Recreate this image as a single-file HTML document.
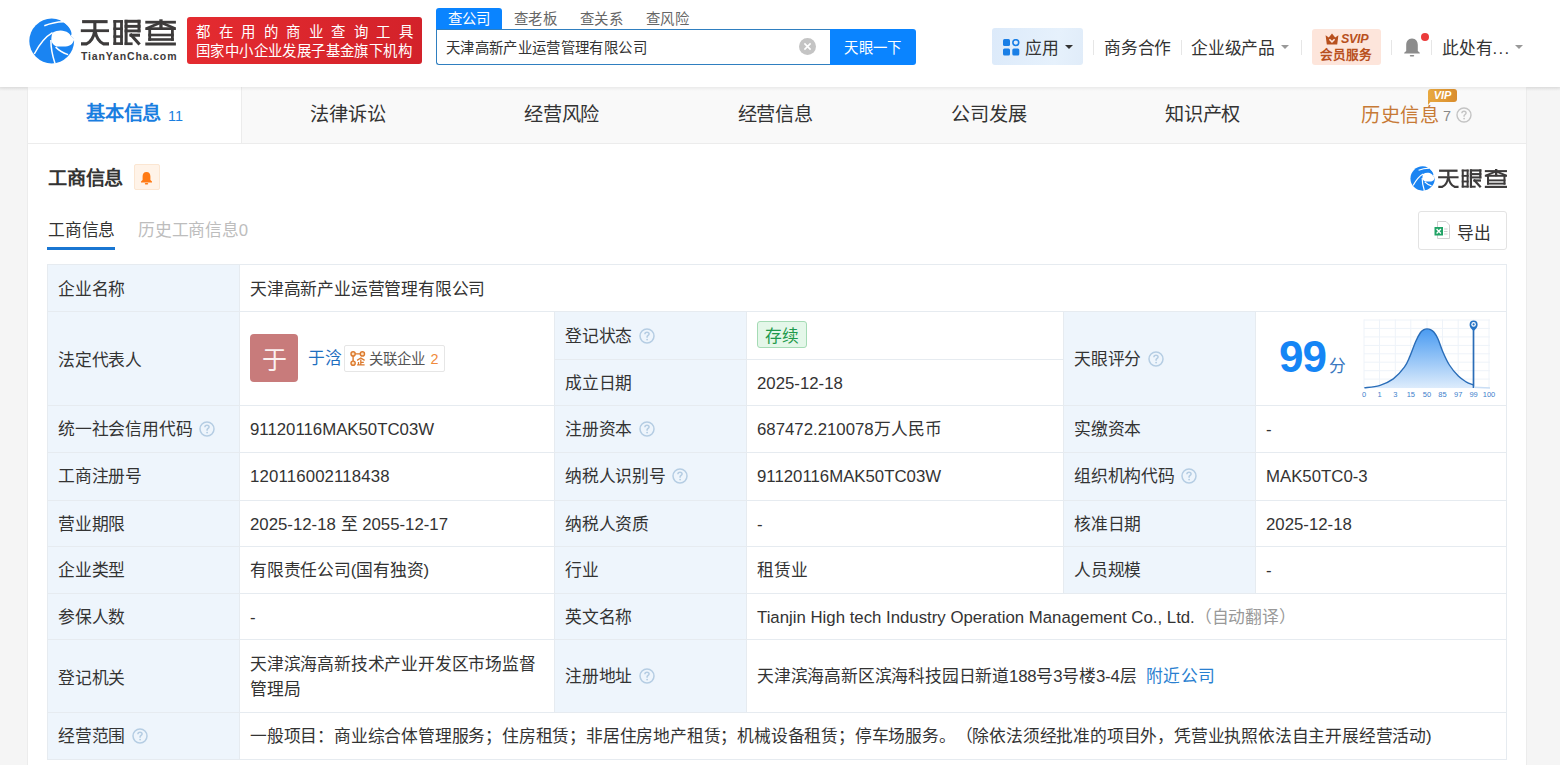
<!DOCTYPE html>
<html lang="zh-CN">
<head>
<meta charset="utf-8">
<style>
*{margin:0;padding:0;box-sizing:border-box}
html,body{width:1560px;height:765px;overflow:hidden;background:#f5f5f5;font-family:"Liberation Sans",sans-serif;color:#333}
.a{position:absolute;white-space:nowrap}
.sep{position:absolute;width:1px;background:#e6e6e6}
.caret{position:absolute;width:0;height:0;border-left:4px solid transparent;border-right:4px solid transparent;border-top:4px solid #999}
.tab{position:absolute;top:88px;height:54px;line-height:54px;text-align:center;font-size:19.2px;color:#333;letter-spacing:-0.2px}
.t16{font-size:16.8px;letter-spacing:-0.2px;text-spacing-trim:space-all}
.lbl{position:absolute;background:#eef5fc}
.hl{position:absolute;height:1px;background:#e6ebf0}
.vl{position:absolute;width:1px;background:#e6ebf0}
</style>
</head>
<body>
<!-- header -->
<div class="a" style="left:0;top:0;width:1560px;height:87px;background:#fff;box-shadow:0 1px 4px rgba(0,0,0,.07)"></div>
<svg class="a" style="left:24px;top:14px" width="56" height="54" viewBox="24 14 56 54">
  <circle cx="51.7" cy="41" r="22.4" fill="#1a84f2"/>
  <path d="M52.5 32.7 C55 31.3 58 30.5 60.6 30.5 C63.5 30.5 66.3 31.5 68.1 32.7 C69.5 33.7 70.3 34.7 70.7 35.8 L74.5 39 C73.8 41 73 42.6 71.9 44 C70 45.5 68 46.5 65.6 46.5 L56.2 46.5 C54 45.5 52.5 44 51.8 42.1 C51.3 40.5 51.2 38.5 51.5 37.1 C51.6 35.5 52 34 52.5 32.7 Z" fill="#fff"/>
  <path d="M60.5 20.8 C65.5 23 69.5 26.8 71 31.3 C71.7 33.3 71.8 35 70.7 35.8 L74.5 39 L77 39 L77 17 L62 17 Z" fill="#fff"/>
  <path d="M44.3 25.8 C50 23.5 57 22 63.5 21.8" stroke="#fff" stroke-width="1.5" fill="none"/>
  <path d="M34.3 54 C39 45 45 37 52.5 32.7" stroke="#fff" stroke-width="1.5" fill="none"/>
  <path d="M50.9 40 C50.8 48 52.5 56 55 63.5" stroke="#fff" stroke-width="1.5" fill="none"/>
  <path d="M55.6 47.1 C59 50.5 63.5 53 68.1 54.6" stroke="#fff" stroke-width="1.5" fill="none"/>
</svg>
<svg class="a" style="left:76px;top:14px" width="106" height="36" viewBox="76 14 106 36">
 <g fill="#3d3b3b">
  <rect x="82.1" y="20.1" width="25.5" height="3.1"/>
  <rect x="80.8" y="29.3" width="28.2" height="2.8"/>
  <rect x="93.3" y="22" width="3.1" height="8"/>
  <rect x="113.4" y="20.1" width="2.8" height="24.8"/><rect x="120.1" y="20.1" width="2.8" height="24.8"/>
  <rect x="113.4" y="20.1" width="9.5" height="2.6"/><rect x="113.4" y="27.5" width="9.5" height="2.5"/><rect x="113.4" y="35.3" width="9.5" height="2.5"/><rect x="113.4" y="42.3" width="9.5" height="2.6"/>
  <rect x="124.6" y="19.8" width="3" height="25.2"/>
  <rect x="124.6" y="19.8" width="15.9" height="3"/><rect x="124.6" y="24.9" width="15.9" height="2.9"/><rect x="124.6" y="29.5" width="15.9" height="2.8"/>
  <rect x="137.5" y="19.8" width="3" height="12.5"/>
  <rect x="124.6" y="42.4" width="8" height="2.7"/>
  <rect x="145.3" y="20.8" width="30.6" height="2.8"/>
  <rect x="159.3" y="19.3" width="3.3" height="10"/>
  <rect x="145.3" y="27.3" width="30.6" height="2.7"/>
  <rect x="148.3" y="27.3" width="2.8" height="13.6"/><rect x="171" y="27.3" width="2.8" height="13.6"/>
  <rect x="148.3" y="33.7" width="25.5" height="2.6"/><rect x="148.3" y="38.2" width="25.5" height="2.6"/>
  <rect x="145.3" y="42.5" width="30.6" height="3"/>
 </g>
 <g fill="none" stroke="#3d3b3b" stroke-width="3.1">
  <path d="M94.6 31.5 Q93 41 86.5 43.9 L81 43.9"/>
  <path d="M95.2 31.5 Q97 41 103.5 43.9 L109 43.9"/>
  <path d="M129.5 35.2 L140 35.2"/>
  <path d="M130.2 34 L139.6 44.5"/>
  <path d="M160.9 22.5 L146.5 28.5 M160.9 22.5 L175 28.5" stroke-width="2.6"/>
 </g>
</svg>
<div class="a" style="left:81px;top:49px;font-size:10.5px;line-height:14px;font-weight:bold;color:#3d3b3b;letter-spacing:0.85px">TianYanCha.com</div>
<!-- red banner -->
<div class="a" style="left:187px;top:17px;width:235px;height:47px;border-radius:3px;background:linear-gradient(90deg,#e42b30,#d3222a)"></div>
<div class="a" style="left:196px;top:23px;font-size:14.4px;line-height:19px;color:#fff;letter-spacing:8.5px">都在用的商业查询工具</div>
<div class="a" style="left:196px;top:42px;font-size:14.4px;line-height:19px;color:#fff;letter-spacing:0.4px">国家中小企业发展子基金旗下机构</div>
<!-- search tabs -->
<div class="a" style="left:436px;top:8px;width:66px;height:22px;background:#0a84ff;border-radius:3px 3px 0 0"></div>
<div class="a" style="left:436px;top:9px;width:66px;line-height:21px;font-size:14.4px;color:#fff;text-align:center;letter-spacing:0.3px">查公司</div>
<div class="a" style="left:514px;top:9px;line-height:21px;font-size:14.4px;color:#666;letter-spacing:0.3px">查老板</div>
<div class="a" style="left:580px;top:9px;line-height:21px;font-size:14.4px;color:#666;letter-spacing:0.3px">查关系</div>
<div class="a" style="left:646px;top:9px;line-height:21px;font-size:14.4px;color:#666;letter-spacing:0.3px">查风险</div>
<div class="a" style="left:436px;top:29px;width:396px;height:36px;border:1px solid #2f7fc0;border-right:none;border-radius:0 0 0 3px;background:#fff"></div>
<div class="a" style="left:446px;top:30px;line-height:36px;font-size:14.4px;color:#333;letter-spacing:0.35px">天津高新产业运营管理有限公司</div>
<div class="a" style="left:798.5px;top:37.5px;width:17px;height:17px;border-radius:50%;background:#c4c4c4"></div>
<svg class="a" style="left:798.5px;top:37.5px" width="17" height="17" viewBox="0 0 17 17"><path d="M5.4 5.4 L11.6 11.6 M11.6 5.4 L5.4 11.6" stroke="#fff" stroke-width="1.6"/></svg>
<div class="a" style="left:830px;top:29px;width:86px;height:36px;background:#0a84ff;border-radius:0 3px 3px 0"></div>
<div class="a" style="left:830px;top:30px;width:86px;line-height:36px;font-size:14.4px;color:#fff;text-align:center;letter-spacing:0.3px">天眼一下</div>
<!-- right nav -->
<div class="a" style="left:992px;top:28px;width:91px;height:37px;border-radius:3px;background:linear-gradient(100deg,#dceafa,#e6f1fc 70%,#e0ecf9)"></div>
<svg class="a" style="left:1003px;top:39px" width="17" height="17" viewBox="0 0 17 17">
  <rect x="0" y="0" width="7" height="7" rx="1.5" fill="#1a7fe6"/>
  <circle cx="12.8" cy="3.6" r="2.9" fill="none" stroke="#1a7fe6" stroke-width="1.6"/>
  <rect x="0" y="9.5" width="7" height="7" rx="1.5" fill="#1a7fe6"/>
  <rect x="9.3" y="9.5" width="7" height="7" rx="1.5" fill="#1a7fe6"/>
</svg>
<div class="a t16" style="left:1025px;top:36.5px;line-height:24px">应用</div>
<div class="caret" style="left:1064.5px;top:45px;border-top-color:#333;border-top-width:4.5px"></div>
<div class="sep" style="left:1093px;top:40px;height:15px"></div>
<div class="a t16" style="left:1104px;top:36.5px;line-height:24px">商务合作</div>
<div class="sep" style="left:1181px;top:40px;height:15px"></div>
<div class="a t16" style="left:1191px;top:36.5px;line-height:24px">企业级产品</div>
<div class="caret" style="left:1281px;top:45px"></div>
<div class="sep" style="left:1301px;top:40px;height:15px"></div>
<div class="a" style="left:1312px;top:29px;width:69px;height:36px;border-radius:3px;background:#fde5db"></div>
<svg class="a" style="left:1325px;top:33px" width="14" height="12" viewBox="0 0 14 12">
  <path d="M0.6 2.2 L3.8 4.4 L7 0.6 L10.2 4.4 L13.4 2.2 L12.2 11.4 L1.8 11.4 Z" fill="#b8501e"/>
  <path d="M4.4 6.2 L7 8.8 L9.6 6.2" stroke="#fde5db" stroke-width="1.6" fill="none"/>
</svg>
<div class="a" style="left:1341px;top:31px;font-size:12.5px;line-height:16px;font-weight:bold;font-style:italic;color:#b8501e;letter-spacing:-0.3px">SVIP</div>
<div class="a" style="left:1320px;top:46px;font-size:12.6px;line-height:18px;font-weight:bold;color:#b8501e;letter-spacing:0.1px">会员服务</div>
<div class="sep" style="left:1391px;top:40px;height:15px"></div>
<svg class="a" style="left:1403px;top:37px" width="18" height="21" viewBox="0 0 18 21">
  <path d="M9 1.5 C5 1.5 3.2 4.5 3.2 8 L3.2 14 L1.2 15.8 L1.2 16.6 L16.8 16.6 L16.8 15.8 L14.8 14 L14.8 8 C14.8 4.5 13 1.5 9 1.5 Z" fill="#8c8c8c"/>
  <rect x="6.8" y="18" width="4.4" height="1.6" rx="0.8" fill="#8c8c8c"/>
</svg>
<div class="a" style="left:1421px;top:32.5px;width:8px;height:8px;border-radius:50%;background:#eb3b3b"></div>
<div class="sep" style="left:1431px;top:40px;height:15px"></div>
<div class="a t16" style="left:1442px;top:36.5px;line-height:24px">此处有<span style="letter-spacing:1.4px">...</span></div>
<div class="caret" style="left:1515px;top:45px"></div>

<!-- card -->
<div class="a" style="left:27px;top:87px;width:1500px;height:700px;background:#fff;border-left:1px solid #ececec;border-right:1px solid #ececec"></div>
<div class="a" style="left:28px;top:87px;width:1498px;height:57px;background:#f9f9f9;border-bottom:1px solid #ececec"></div>
<div class="a" style="left:28px;top:87px;width:214px;height:56px;background:#fff;border-right:1px solid #ececec"></div>
<div class="a" style="left:86px;top:102px;line-height:24px;font-size:19.2px;font-weight:bold;color:#1a7ee0;letter-spacing:-0.2px">基本信息</div>
<div class="a" style="left:168px;top:104px;line-height:24px;font-size:14.4px;color:#1a7ee0">11</div>
<div class="tab" style="left:241px;width:213.7px">法律诉讼</div>
<div class="tab" style="left:454.7px;width:213.7px">经营风险</div>
<div class="tab" style="left:668.4px;width:213.7px">经营信息</div>
<div class="tab" style="left:882.1px;width:213.7px">公司发展</div>
<div class="tab" style="left:1095.8px;width:213.7px">知识产权</div>
<div class="a" style="left:1361px;top:103.5px;line-height:24px;font-size:19.2px;color:#c77a36;letter-spacing:0.6px">历史信息</div>
<div class="a" style="left:1443px;top:104px;line-height:24px;font-size:14.4px;color:#888">7</div>
<svg class="a" style="left:1456px;top:106.5px" width="16" height="16" viewBox="0 0 16 16"><circle cx="8" cy="8" r="7" fill="none" stroke="#c4c4c4" stroke-width="1.4"/><path d="M5.9 6.3 C5.9 5 6.8 4.3 8 4.3 C9.2 4.3 10.1 5.1 10.1 6.1 C10.1 7.3 8.4 7.5 8.1 8.7 L8.1 9.7" fill="none" stroke="#c4c4c4" stroke-width="1.4"/><circle cx="8.1" cy="11.6" r="0.9" fill="#c4c4c4"/></svg>
<div class="a" style="left:1428px;top:89px;width:29px;height:13px;border-radius:3px;background:linear-gradient(90deg,#e9a93f,#d98c2c)"></div>
<div class="a" style="left:1428px;top:100px;width:0;height:0;border-left:4px solid #e3a03a;border-bottom:5px solid transparent"></div>
<div class="a" style="left:1428px;top:88px;width:29px;text-align:center;font-size:11px;line-height:14px;font-weight:bold;font-style:italic;color:#fff">VIP</div>

<div class="a" style="left:0;top:87px;width:1560px;height:4px;background:linear-gradient(rgba(0,0,0,.06),rgba(0,0,0,0))"></div>
<!-- section title -->
<div class="a" style="left:48px;top:167px;font-size:19.2px;line-height:24px;font-weight:bold;color:#333;letter-spacing:-0.2px">工商信息</div>
<div class="a" style="left:134px;top:164px;width:26px;height:26px;border-radius:2px;background:#fff3e8;border:1px solid #fbe6d2"></div>
<svg class="a" style="left:140px;top:170.5px" width="13" height="14" viewBox="0 0 13 14">
  <path d="M6.5 1 C3.8 1 2.6 3 2.6 5.5 L2.6 9 L1 10.6 L1 11.4 L12 11.4 L12 10.6 L10.4 9 L10.4 5.5 C10.4 3 9.2 1 6.5 1 Z" fill="#ff7a14"/>
  <rect x="4.8" y="12" width="3.4" height="1.6" rx="0.8" fill="#ff7a14"/>
</svg>
<div class="a t16" style="left:48px;top:218.5px;line-height:24px;color:#333">工商信息</div>
<div class="a" style="left:47px;top:247px;width:68px;height:3px;background:#1976d2"></div>
<div class="a t16" style="left:138px;top:218.5px;line-height:24px;color:#bdbdbd">历史工商信息0</div>

<!-- right logo -->
<svg class="a" style="left:1410px;top:166px" width="25" height="25" viewBox="28.5 18.5 46 45">
  <circle cx="51.7" cy="41" r="22.4" fill="#1a84f2"/>
  <path d="M52.5 32.7 C55 31.3 58 30.5 60.6 30.5 C63.5 30.5 66.3 31.5 68.1 32.7 C69.5 33.7 70.3 34.7 70.7 35.8 L74.5 39 C73.8 41 73 42.6 71.9 44 C70 45.5 68 46.5 65.6 46.5 L56.2 46.5 C54 45.5 52.5 44 51.8 42.1 C51.3 40.5 51.2 38.5 51.5 37.1 C51.6 35.5 52 34 52.5 32.7 Z" fill="#fff"/>
  <path d="M60.5 20.8 C65.5 23 69.5 26.8 71 31.3 C71.7 33.3 71.8 35 70.7 35.8 L74.5 39 L77 39 L77 17 L62 17 Z" fill="#fff"/>
  <path d="M44.3 25.8 C50 23.5 57 22 63.5 21.8" stroke="#fff" stroke-width="2.2" fill="none"/>
  <path d="M34.3 54 C39 45 45 37 52.5 32.7" stroke="#fff" stroke-width="2.2" fill="none"/>
  <path d="M50.9 40 C50.8 48 52.5 56 55 63.5" stroke="#fff" stroke-width="2.2" fill="none"/>
  <path d="M55.6 47.1 C59 50.5 63.5 53 68.1 54.6" stroke="#fff" stroke-width="2.2" fill="none"/>
</svg>
<svg class="a" style="left:1437.5px;top:168.5px" width="70" height="20" viewBox="80.6 19.3 96.7 27.6">
 <g fill="#3d3b3b">
  <rect x="82.1" y="20.1" width="25.5" height="3.1"/>
  <rect x="80.8" y="29.3" width="28.2" height="2.8"/>
  <rect x="93.3" y="22" width="3.1" height="8"/>
  <rect x="113.4" y="20.1" width="2.8" height="24.8"/><rect x="120.1" y="20.1" width="2.8" height="24.8"/>
  <rect x="113.4" y="20.1" width="9.5" height="2.6"/><rect x="113.4" y="27.5" width="9.5" height="2.5"/><rect x="113.4" y="35.3" width="9.5" height="2.5"/><rect x="113.4" y="42.3" width="9.5" height="2.6"/>
  <rect x="124.6" y="19.8" width="3" height="25.2"/>
  <rect x="124.6" y="19.8" width="15.9" height="3"/><rect x="124.6" y="24.9" width="15.9" height="2.9"/><rect x="124.6" y="29.5" width="15.9" height="2.8"/>
  <rect x="137.5" y="19.8" width="3" height="12.5"/>
  <rect x="124.6" y="42.4" width="8" height="2.7"/>
  <rect x="145.3" y="20.8" width="30.6" height="2.8"/>
  <rect x="159.3" y="19.3" width="3.3" height="10"/>
  <rect x="145.3" y="27.3" width="30.6" height="2.7"/>
  <rect x="148.3" y="27.3" width="2.8" height="13.6"/><rect x="171" y="27.3" width="2.8" height="13.6"/>
  <rect x="148.3" y="33.7" width="25.5" height="2.6"/><rect x="148.3" y="38.2" width="25.5" height="2.6"/>
  <rect x="145.3" y="42.5" width="30.6" height="3"/>
 </g>
 <g fill="none" stroke="#3d3b3b" stroke-width="3.1">
  <path d="M94.6 31.5 Q93 41 86.5 43.9 L81 43.9"/>
  <path d="M95.2 31.5 Q97 41 103.5 43.9 L109 43.9"/>
  <path d="M129.5 35.2 L140 35.2"/>
  <path d="M130.2 34 L139.6 44.5"/>
  <path d="M160.9 22.5 L146.5 28.5 M160.9 22.5 L175 28.5" stroke-width="2.6"/>
 </g>
</svg>
<!-- export -->
<div class="a" style="left:1418px;top:211px;width:89px;height:39px;border:1px solid #e3e3e3;border-radius:3px;background:#fff"></div>
<svg class="a" style="left:1434px;top:221px" width="17" height="19" viewBox="0 0 17 19">
  <path d="M3.5 0.5 L12 0.5 L15.5 4 L15.5 17.5 L3.5 17.5 Z" fill="#fff" stroke="#d0d0d0" stroke-width="1"/>
  <path d="M10 8 L13.5 8 M10 10.5 L13.5 10.5 M10 13 L13.5 13" stroke="#c8c8c8" stroke-width="0.9"/>
  <rect x="0.5" y="6" width="8.5" height="8.5" fill="#21a366"/>
  <path d="M2.6 8 L6.9 12.5 M6.9 8 L2.6 12.5" stroke="#fff" stroke-width="1.3"/>
</svg>
<div class="a t16" style="left:1457px;top:221.5px;line-height:24px;color:#333">导出</div>
<div class="a" style="left:47px;top:264px;width:1460px;height:496px;background:#fff;border:1px solid #e6ebf0"></div>
<div class="lbl" style="left:48px;top:265px;width:191px;height:494px"></div>
<div class="lbl" style="left:555px;top:312px;width:191px;height:400px"></div>
<div class="lbl" style="left:1064px;top:312px;width:191px;height:281px"></div>
<div class="hl" style="left:48px;top:311px;width:1458px"></div>
<div class="hl" style="left:48px;top:405px;width:1458px"></div>
<div class="hl" style="left:48px;top:452px;width:1458px"></div>
<div class="hl" style="left:48px;top:500px;width:1458px"></div>
<div class="hl" style="left:48px;top:546px;width:1458px"></div>
<div class="hl" style="left:48px;top:593px;width:1458px"></div>
<div class="hl" style="left:48px;top:639px;width:1458px"></div>
<div class="hl" style="left:48px;top:712px;width:1458px"></div>
<div class="hl" style="left:555px;top:359px;width:508px"></div>
<div class="vl" style="left:239px;top:265px;height:494px"></div>
<div class="vl" style="left:554px;top:312px;height:400px"></div>
<div class="vl" style="left:746px;top:312px;height:400px"></div>
<div class="vl" style="left:1063px;top:312px;height:281px"></div>
<div class="vl" style="left:1255px;top:312px;height:281px"></div>
<div class="a t16" style="left:58px;top:277.5px;line-height:24px;">企业名称</div>
<div class="a t16" style="left:250px;top:277.5px;line-height:24px;">天津高新产业运营管理有限公司</div>
<div class="a t16" style="left:58px;top:348.5px;line-height:24px;">法定代表人</div>
<div class="a" style="left:250px;top:334px;width:48px;height:48px;border-radius:4px;background:#c87b7b"></div>
<div class="a" style="left:250px;top:335.5px;width:48px;line-height:48px;font-size:25px;color:#fbf1f1;text-align:center">于</div>
<div class="a t16" style="left:308px;top:347px;line-height:24px;color:#1f6fbf">于浛</div>
<div class="a" style="left:344px;top:345px;width:101px;height:27px;border:1px solid #e6e6e6;border-radius:2px;background:#fff"></div>
<svg class="a" style="left:346px;top:347px" width="24" height="23" viewBox="0 0 24 23">
  <g stroke="#dc7a2e" fill="none" stroke-width="1.4">
  <path d="M9.2 6.9 L14.3 6.9 M7.1 9 L7.1 14.1"/>
  <circle cx="7.1" cy="6.9" r="2.1" fill="#fde1c0"/><circle cx="16.4" cy="6.9" r="2.1" fill="#fde1c0"/><circle cx="7.1" cy="16.2" r="2.1" fill="#fde1c0"/>
  <path d="M11.1 13.4 L14.8 11 L18.6 13.4 M14.8 12.4 L14.8 17.9 M14.8 15.3 L17.8 15.3 M11.1 17.9 L18.6 17.9 M12.5 15 L12.5 17.9" stroke-width="1.3"/>
  </g>
</svg>
<div class="a" style="left:369px;top:347px;line-height:25px;font-size:14.4px;color:#555;letter-spacing:-0.1px">关联企业 <span style="color:#f08a3c;letter-spacing:0;margin-left:2px">2</span></div>
<div class="a t16" style="left:565px;top:324.5px;line-height:24px;">登记状态</div>
<svg class="a" style="left:638.5px;top:327.5px" width="16" height="16" viewBox="0 0 16 16"><circle cx="8" cy="8" r="7" fill="none" stroke="#b5cde3" stroke-width="1.5"/><path d="M5.9 6.3 C5.9 5 6.8 4.3 8 4.3 C9.2 4.3 10.1 5.1 10.1 6.1 C10.1 7.3 8.4 7.5 8.1 8.7 L8.1 9.7" fill="none" stroke="#b5cde3" stroke-width="1.5"/><circle cx="8.1" cy="11.6" r="0.9" fill="#b5cde3"/></svg>
<div class="a" style="left:757px;top:321px;width:50px;height:27px;border:1px solid #a5dbb5;border-radius:3px;background:#e4f7e9"></div>
<div class="a t16" style="left:757px;top:325px;width:50px;line-height:24px;text-align:center;color:#1f9a4c">存续</div>
<div class="a t16" style="left:565px;top:371.5px;line-height:24px;">成立日期</div>
<div class="a t16" style="left:757px;top:371.5px;line-height:24px; letter-spacing:0">2025-12-18</div>
<div class="a t16" style="left:1074px;top:347.5px;line-height:24px;">天眼评分</div>
<svg class="a" style="left:1147.5px;top:350.5px" width="16" height="16" viewBox="0 0 16 16"><circle cx="8" cy="8" r="7" fill="none" stroke="#b5cde3" stroke-width="1.5"/><path d="M5.9 6.3 C5.9 5 6.8 4.3 8 4.3 C9.2 4.3 10.1 5.1 10.1 6.1 C10.1 7.3 8.4 7.5 8.1 8.7 L8.1 9.7" fill="none" stroke="#b5cde3" stroke-width="1.5"/><circle cx="8.1" cy="11.6" r="0.9" fill="#b5cde3"/></svg>
<div class="a" style="left:1279px;top:333px;line-height:48px;font-size:44px;font-weight:bold;color:#1585f5;letter-spacing:-0.9px">99</div>
<div class="a" style="left:1329px;top:354.5px;line-height:24px;font-size:16.8px;color:#3a78bf">分</div>
<div class="a t16" style="left:58px;top:418.25px;line-height:24px;">统一社会信用代码</div>
<svg class="a" style="left:199.0px;top:420.5px" width="16" height="16" viewBox="0 0 16 16"><circle cx="8" cy="8" r="7" fill="none" stroke="#b5cde3" stroke-width="1.5"/><path d="M5.9 6.3 C5.9 5 6.8 4.3 8 4.3 C9.2 4.3 10.1 5.1 10.1 6.1 C10.1 7.3 8.4 7.5 8.1 8.7 L8.1 9.7" fill="none" stroke="#b5cde3" stroke-width="1.5"/><circle cx="8.1" cy="11.6" r="0.9" fill="#b5cde3"/></svg>
<div class="a t16" style="left:250px;top:418.25px;line-height:24px; letter-spacing:0">91120116MAK50TC03W</div>
<div class="a t16" style="left:565px;top:418.25px;line-height:24px;">注册资本</div>
<svg class="a" style="left:638.5px;top:421.0px" width="16" height="16" viewBox="0 0 16 16"><circle cx="8" cy="8" r="7" fill="none" stroke="#b5cde3" stroke-width="1.5"/><path d="M5.9 6.3 C5.9 5 6.8 4.3 8 4.3 C9.2 4.3 10.1 5.1 10.1 6.1 C10.1 7.3 8.4 7.5 8.1 8.7 L8.1 9.7" fill="none" stroke="#b5cde3" stroke-width="1.5"/><circle cx="8.1" cy="11.6" r="0.9" fill="#b5cde3"/></svg>
<div class="a t16" style="left:757px;top:418.25px;line-height:24px; letter-spacing:0">687472.210078万人民币</div>
<div class="a t16" style="left:1074px;top:418.25px;line-height:24px;">实缴资本</div>
<div class="a t16" style="left:1266px;top:418.25px;line-height:24px; letter-spacing:0">-</div>
<div class="a t16" style="left:58px;top:465px;line-height:24px;">工商注册号</div>
<div class="a t16" style="left:250px;top:465px;line-height:24px; letter-spacing:0.15px">120116002118438</div>
<div class="a t16" style="left:565px;top:465px;line-height:24px;">纳税人识别号</div>
<svg class="a" style="left:672.0px;top:468.0px" width="16" height="16" viewBox="0 0 16 16"><circle cx="8" cy="8" r="7" fill="none" stroke="#b5cde3" stroke-width="1.5"/><path d="M5.9 6.3 C5.9 5 6.8 4.3 8 4.3 C9.2 4.3 10.1 5.1 10.1 6.1 C10.1 7.3 8.4 7.5 8.1 8.7 L8.1 9.7" fill="none" stroke="#b5cde3" stroke-width="1.5"/><circle cx="8.1" cy="11.6" r="0.9" fill="#b5cde3"/></svg>
<div class="a t16" style="left:757px;top:465px;line-height:24px; letter-spacing:0">91120116MAK50TC03W</div>
<div class="a t16" style="left:1074px;top:465px;line-height:24px;">组织机构代码</div>
<svg class="a" style="left:1181.0px;top:468.0px" width="16" height="16" viewBox="0 0 16 16"><circle cx="8" cy="8" r="7" fill="none" stroke="#b5cde3" stroke-width="1.5"/><path d="M5.9 6.3 C5.9 5 6.8 4.3 8 4.3 C9.2 4.3 10.1 5.1 10.1 6.1 C10.1 7.3 8.4 7.5 8.1 8.7 L8.1 9.7" fill="none" stroke="#b5cde3" stroke-width="1.5"/><circle cx="8.1" cy="11.6" r="0.9" fill="#b5cde3"/></svg>
<div class="a t16" style="left:1266px;top:465px;line-height:24px; letter-spacing:0">MAK50TC0-3</div>
<div class="a t16" style="left:58px;top:512.5px;line-height:24px;">营业期限</div>
<div class="a t16" style="left:250px;top:512.5px;line-height:24px; letter-spacing:0">2025-12-18 至 2055-12-17</div>
<div class="a t16" style="left:565px;top:512.5px;line-height:24px;">纳税人资质</div>
<div class="a t16" style="left:757px;top:512.5px;line-height:24px; letter-spacing:0">-</div>
<div class="a t16" style="left:1074px;top:512.5px;line-height:24px;">核准日期</div>
<div class="a t16" style="left:1266px;top:512.5px;line-height:24px; letter-spacing:0">2025-12-18</div>
<div class="a t16" style="left:58px;top:559px;line-height:24px;">企业类型</div>
<div class="a t16" style="left:250px;top:559px;line-height:24px;">有限责任公司(国有独资)</div>
<div class="a t16" style="left:565px;top:559px;line-height:24px;">行业</div>
<div class="a t16" style="left:757px;top:559px;line-height:24px;">租赁业</div>
<div class="a t16" style="left:1074px;top:559px;line-height:24px;">人员规模</div>
<div class="a t16" style="left:1266px;top:559px;line-height:24px; letter-spacing:0">-</div>
<div class="a t16" style="left:58px;top:605.5px;line-height:24px;">参保人数</div>
<div class="a t16" style="left:250px;top:605.5px;line-height:24px; letter-spacing:0">-</div>
<div class="a t16" style="left:565px;top:605.5px;line-height:24px;">英文名称</div>
<div class="a t16" style="left:757px;top:605.5px;line-height:24px; letter-spacing:0">Tianjin High tech Industry Operation Management Co., Ltd.<span style="color:#999;letter-spacing:-0.2px">（自动翻译）</span></div>
<div class="a t16" style="left:58px;top:666.5px;line-height:24px;">登记机关</div>
<div class="a t16" style="left:250px;top:652.7px;line-height:24px;">天津滨海高新技术产业开发区市场监督</div>
<div class="a t16" style="left:250px;top:677.8px;line-height:24px;">管理局</div>
<div class="a t16" style="left:565px;top:665px;line-height:24px;">注册地址</div>
<svg class="a" style="left:638.5px;top:668.0px" width="16" height="16" viewBox="0 0 16 16"><circle cx="8" cy="8" r="7" fill="none" stroke="#b5cde3" stroke-width="1.5"/><path d="M5.9 6.3 C5.9 5 6.8 4.3 8 4.3 C9.2 4.3 10.1 5.1 10.1 6.1 C10.1 7.3 8.4 7.5 8.1 8.7 L8.1 9.7" fill="none" stroke="#b5cde3" stroke-width="1.5"/><circle cx="8.1" cy="11.6" r="0.9" fill="#b5cde3"/></svg>
<div class="a t16" style="left:757px;top:665px;line-height:24px;">天津滨海高新区滨海科技园日新道188号3号楼3-4层 <span style="color:#2a7fd0;margin-left:5px;letter-spacing:0.5px">附近公司</span></div>
<div class="a t16" style="left:58px;top:725px;line-height:24px;">经营范围</div>
<svg class="a" style="left:132.0px;top:728.0px" width="16" height="16" viewBox="0 0 16 16"><circle cx="8" cy="8" r="7" fill="none" stroke="#b5cde3" stroke-width="1.5"/><path d="M5.9 6.3 C5.9 5 6.8 4.3 8 4.3 C9.2 4.3 10.1 5.1 10.1 6.1 C10.1 7.3 8.4 7.5 8.1 8.7 L8.1 9.7" fill="none" stroke="#b5cde3" stroke-width="1.5"/><circle cx="8.1" cy="11.6" r="0.9" fill="#b5cde3"/></svg>
<div class="a t16" style="left:250px;top:725px;line-height:24px;">一般项目：商业综合体管理服务；住房租赁；非居住房地产租赁；机械设备租赁；停车场服务。（除依法须经批准的项目外，凭营业执照依法自主开展经营活动)</div>
<svg class="a" style="left:1355px;top:312px" width="145" height="93" viewBox="1355 312 145 93">
<defs><linearGradient id="bg1" x1="0" y1="0" x2="0" y2="1"><stop offset="0" stop-color="#4a9bf1"/><stop offset="1" stop-color="#ddecfc"/></linearGradient></defs>
<line x1="1364" y1="319.5" x2="1364" y2="388" stroke="#eef3f9" stroke-width="1"/><line x1="1379.5" y1="319.5" x2="1379.5" y2="388" stroke="#eef3f9" stroke-width="1"/><line x1="1395.3" y1="319.5" x2="1395.3" y2="388" stroke="#eef3f9" stroke-width="1"/><line x1="1410.8" y1="319.5" x2="1410.8" y2="388" stroke="#eef3f9" stroke-width="1"/><line x1="1427" y1="319.5" x2="1427" y2="388" stroke="#eef3f9" stroke-width="1"/><line x1="1442.5" y1="319.5" x2="1442.5" y2="388" stroke="#eef3f9" stroke-width="1"/><line x1="1458.2" y1="319.5" x2="1458.2" y2="388" stroke="#eef3f9" stroke-width="1"/><line x1="1473.6" y1="319.5" x2="1473.6" y2="388" stroke="#eef3f9" stroke-width="1"/><line x1="1489" y1="319.5" x2="1489" y2="388" stroke="#eef3f9" stroke-width="1"/><line x1="1364" y1="320.0" x2="1490" y2="320.0" stroke="#eef3f9" stroke-width="1"/><line x1="1364" y1="328.4" x2="1490" y2="328.4" stroke="#eef3f9" stroke-width="1"/><line x1="1364" y1="336.9" x2="1490" y2="336.9" stroke="#eef3f9" stroke-width="1"/><line x1="1364" y1="345.4" x2="1490" y2="345.4" stroke="#eef3f9" stroke-width="1"/><line x1="1364" y1="353.8" x2="1490" y2="353.8" stroke="#eef3f9" stroke-width="1"/><line x1="1364" y1="362.2" x2="1490" y2="362.2" stroke="#eef3f9" stroke-width="1"/><line x1="1364" y1="370.7" x2="1490" y2="370.7" stroke="#eef3f9" stroke-width="1"/><line x1="1364" y1="379.1" x2="1490" y2="379.1" stroke="#eef3f9" stroke-width="1"/><line x1="1364" y1="387.6" x2="1490" y2="387.6" stroke="#eef3f9" stroke-width="1"/>
<path d="M1364.4 387.8 C1366.90 387.43 1374.58 387.08 1379.4 385.6 C1384.22 384.12 1389.13 381.97 1393.3 378.9 C1397.47 375.83 1401.62 371.00 1404.4 367.2 C1407.18 363.40 1408.13 360.35 1410 356.1 C1411.87 351.85 1413.85 345.63 1415.6 341.7 C1417.35 337.77 1419.10 334.52 1420.5 332.5 C1421.90 330.48 1422.92 330.20 1424 329.6 C1425.08 329.00 1425.92 328.90 1427 328.9 C1428.08 328.90 1429.33 329.03 1430.5 329.6 C1431.67 330.17 1432.75 330.73 1434 332.3 C1435.25 333.87 1436.53 335.77 1438 339 C1439.47 342.23 1440.90 347.37 1442.8 351.7 C1444.70 356.03 1446.82 360.93 1449.4 365 C1451.98 369.07 1455.53 373.30 1458.3 376.1 C1461.07 378.90 1463.50 380.32 1466 381.8 C1468.50 383.28 1472.08 384.47 1473.3 385 L1473.5 388 L1364.4 388 Z" fill="url(#bg1)"/>
<path d="M1364.4 387.8 C1366.90 387.43 1374.58 387.08 1379.4 385.6 C1384.22 384.12 1389.13 381.97 1393.3 378.9 C1397.47 375.83 1401.62 371.00 1404.4 367.2 C1407.18 363.40 1408.13 360.35 1410 356.1 C1411.87 351.85 1413.85 345.63 1415.6 341.7 C1417.35 337.77 1419.10 334.52 1420.5 332.5 C1421.90 330.48 1422.92 330.20 1424 329.6 C1425.08 329.00 1425.92 328.90 1427 328.9 C1428.08 328.90 1429.33 329.03 1430.5 329.6 C1431.67 330.17 1432.75 330.73 1434 332.3 C1435.25 333.87 1436.53 335.77 1438 339 C1439.47 342.23 1440.90 347.37 1442.8 351.7 C1444.70 356.03 1446.82 360.93 1449.4 365 C1451.98 369.07 1455.53 373.30 1458.3 376.1 C1461.07 378.90 1463.50 380.32 1466 381.8 C1468.50 383.28 1472.08 384.47 1473.3 385" fill="none" stroke="#2a6db8" stroke-width="1.4"/>
<line x1="1473.5" y1="328" x2="1473.5" y2="388" stroke="#2a6db8" stroke-width="1.7"/>
<line x1="1474" y1="387.3" x2="1490" y2="388" stroke="#c9def5" stroke-width="1.4"/>
<path d="M1473.6 331 C1470.3 328 1469.6 326.3 1469.6 324.4 A4 4 0 1 1 1477.6 324.4 C1477.6 326.3 1476.9 328 1473.6 331 Z" fill="#2573c4"/>
<circle cx="1473.6" cy="324.4" r="2.3" fill="#fff"/><circle cx="1473.6" cy="324.4" r="1.1" fill="#2573c4"/>
<g font-family="Liberation Sans" font-size="7.5" fill="#3d7fcc"><text x="1364" y="397" text-anchor="middle">0</text><text x="1379.5" y="397" text-anchor="middle">1</text><text x="1395.3" y="397" text-anchor="middle">3</text><text x="1410.8" y="397" text-anchor="middle">15</text><text x="1427" y="397" text-anchor="middle">50</text><text x="1442.5" y="397" text-anchor="middle">85</text><text x="1458.2" y="397" text-anchor="middle">97</text><text x="1473.6" y="397" text-anchor="middle">99</text><text x="1489" y="397" text-anchor="middle">100</text></g>
</svg>
</body></html>
